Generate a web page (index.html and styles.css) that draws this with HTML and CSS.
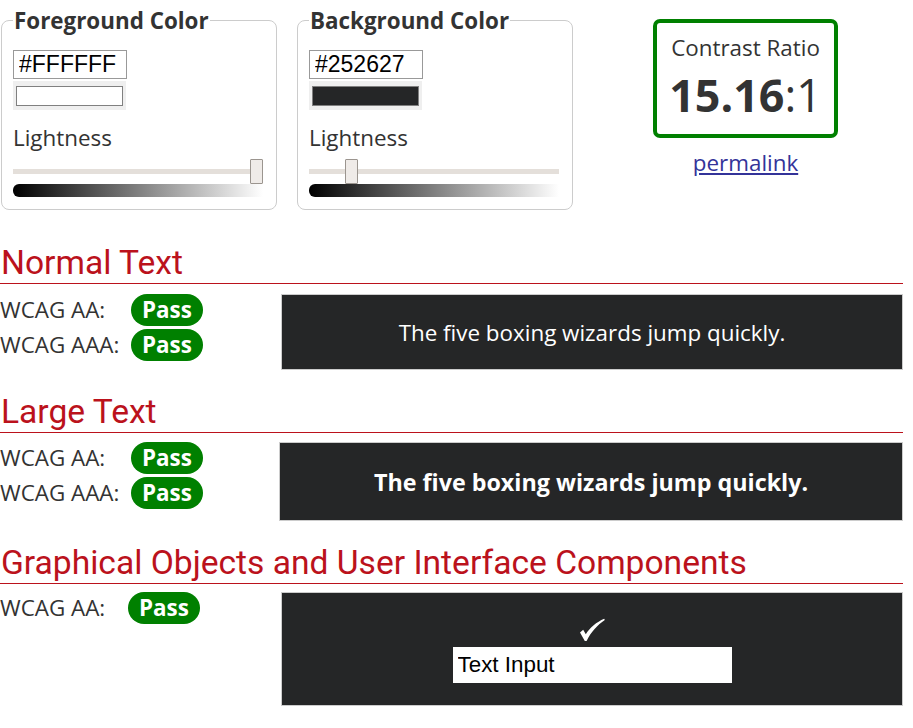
FILE: index.html
```html
<!DOCTYPE html>
<html lang="en">
<head>
<meta charset="utf-8">
<title>Contrast Checker</title>
<link rel="stylesheet" href="styles.css">
</head>
<body>
<div class="page">
  <div class="top">
    <fieldset class="picker">
      <legend>Foreground Color</legend>
      <input class="hex" type="text" value="#FFFFFF">
      <div class="swatch"><div class="swatch-inner swatch-fg"></div></div>
      <div class="label">Lightness</div>
      <div class="slider">
        <div class="track"></div>
        <div class="thumb" style="left: 237px"></div>
      </div>
      <div class="gradient"></div>
    </fieldset>
    <fieldset class="picker">
      <legend>Background Color</legend>
      <input class="hex" type="text" value="#252627">
      <div class="swatch"><div class="swatch-inner swatch-bg"></div></div>
      <div class="label">Lightness</div>
      <div class="slider">
        <div class="track"></div>
        <div class="thumb" style="left: 36px"></div>
      </div>
      <div class="gradient"></div>
    </fieldset>
    <div class="ratio-col">
      <div class="ratio-box">
        <div class="ratio-title">Contrast Ratio</div>
        <div class="ratio-value"><b>15.16</b>:1</div>
      </div>
      <a class="permalink" href="#">permalink</a>
    </div>
  </div>

  <section class="section">
    <h2 class="heading">Normal Text</h2>
    <div class="result">
      <div class="checks">
        <span class="wcag">WCAG AA:</span><span class="pass">Pass</span>
        <span class="wcag">WCAG AAA:</span><span class="pass">Pass</span>
      </div>
      <div class="sample sample-normal">The five boxing wizards jump quickly.</div>
    </div>
  </section>

  <section class="section">
    <h2 class="heading">Large Text</h2>
    <div class="result result-large">
      <div class="checks">
        <span class="wcag">WCAG AA:</span><span class="pass">Pass</span>
        <span class="wcag">WCAG AAA:</span><span class="pass">Pass</span>
      </div>
      <div class="sample sample-large">The five boxing wizards jump quickly.</div>
    </div>
  </section>

  <section class="section">
    <h2 class="heading">Graphical Objects and User Interface Components</h2>
    <div class="result result-ui">
      <div class="checks checks-single">
        <span class="wcag">WCAG AA:</span><span class="pass">Pass</span>
      </div>
      <div class="sample sample-ui">
        <svg class="check" width="27" height="24" viewBox="0 0 27 24" aria-hidden="true">
          <path d="M1 14.5 L4.2 11.8 L6.8 16.2 C 11 9.5, 17.5 4.2, 25.2 0.8 L 25.8 2 C 18.5 6.8, 12 14, 7.6 23 L 5.8 23 Z" fill="#ffffff"/>
        </svg>
        <input class="ui-input" type="text" value="Text Input">
      </div>
    </div>
  </section>
</div>
</body>
</html>
```

FILE: styles.css
```css
* { box-sizing: border-box; }

body {
  margin: 0;
  background: #ffffff;
  color: #333333;
  font-family: "Open Sans", "DejaVu Sans", sans-serif;
  font-size: 22.4px;
}

.page {
  width: 903px;
}

.top {
  display: flex;
  align-items: flex-start;
  padding-left: 1px;
  padding-top: 7px;
}

.picker {
  width: 276px;
  margin: 0 20px 0 0;
  padding: 0 11px 12px 11px;
  border: 1px solid #cccccc;
  border-radius: 8px;
  display: flex;
  flex-direction: column;
  align-items: flex-start;
}

.picker legend {
  padding: 0 1px;
  font-weight: 700;
  font-size: 22.4px;
  line-height: 27px;
  color: #333333;
}

.hex {
  margin-top: 16px;
  width: 114px;
  height: 29px;
  padding: 0 5px;
  border: 1px solid #999999;
  font-family: "Liberation Sans", Arial, sans-serif;
  font-size: 23px;
  color: #000000;
  background: #ffffff;
  outline: none;
}

.swatch {
  margin-top: 2px;
  width: 113px;
  height: 29px;
  padding: 5px 3px 4px 3px;
  background: #efefef;
}

.swatch-inner {
  width: 107px;
  height: 20px;
  border: 1px solid #808080;
}

.swatch-fg { background: #ffffff; }
.swatch-bg { background: #252627; }

.label {
  margin-top: 13px;
  line-height: 30px;
}

.slider {
  position: relative;
  margin-top: 6px;
  width: 250px;
  height: 25px;
}

.track {
  position: absolute;
  left: 0;
  right: 0;
  top: 10px;
  height: 5px;
  background: #e4dfda;
}

.thumb {
  position: absolute;
  top: 0;
  width: 13px;
  height: 25px;
  background: #efebe8;
  border: 1px solid #9b958f;
  border-radius: 1px;
}

.gradient {
  width: 250px;
  height: 13px;
  border-radius: 6px 0 0 6px;
  background: linear-gradient(to right, #000000, #ffffff);
}

.ratio-col {
  margin-left: 60px;
  margin-top: 12px;
  width: 185px;
  display: flex;
  flex-direction: column;
  align-items: center;
}

.ratio-box {
  width: 185px;
  height: 119px;
  border: 4px solid #008000;
  border-radius: 7px;
  padding-top: 10px;
  text-align: center;
}

.ratio-title {
  line-height: 30px;
}

.ratio-value {
  margin-top: 6px;
  font-size: 44.8px;
  line-height: 52px;
}

.ratio-value b {
  font-weight: 700;
}

.permalink {
  margin-top: 10px;
  color: #333399;
  text-decoration: underline;
  line-height: 30px;
}

.section {
  margin-top: 22px;
}

.section:first-of-type {
  margin-top: 33px;
}

.heading {
  margin: 0;
  padding-left: 1px;
  font-family: Roboto, "Liberation Sans", sans-serif;
  font-weight: 400;
  font-size: 33.6px;
  line-height: 40px;
  color: #bb121c;
  border-bottom: 1px solid #bb121c;
}

.result {
  display: grid;
  grid-template-columns: 281px 1fr;
  margin-top: 10px;
}

.result-large {
  grid-template-columns: 279px 1fr;
  margin-top: 9px;
}

.result-ui {
  margin-top: 8px;
}

.checks {
  display: grid;
  grid-template-columns: 131px auto;
  row-gap: 3px;
  align-items: center;
  align-content: start;
  justify-content: start;
}

.checks-single {
  grid-template-columns: 128px auto;
}

.wcag {
  line-height: 30px;
}

.pass {
  display: inline-block;
  background: #008000;
  color: #ffffff;
  font-weight: 700;
  line-height: 32px;
  height: 32px;
  padding: 0 11px;
  border-radius: 16px;
}

.sample {
  background: #252627;
  border: 1px solid #cccccc;
  color: #ffffff;
  display: flex;
  align-items: center;
  justify-content: center;
}

.sample-normal {
  height: 76px;
}

.sample-large {
  height: 79px;
  font-weight: 700;
  font-size: 23.3px;
}

.sample-ui {
  height: 114px;
  flex-direction: column;
  justify-content: flex-start;
  padding-top: 25px;
}

.check {
  display: block;
}

.ui-input {
  margin-top: 5px;
  width: 279px;
  height: 36px;
  padding: 0 5px;
  border: none;
  background: #ffffff;
  color: #000000;
  font-family: "Liberation Sans", Arial, sans-serif;
  font-size: 22.4px;
  outline: none;
}
```
